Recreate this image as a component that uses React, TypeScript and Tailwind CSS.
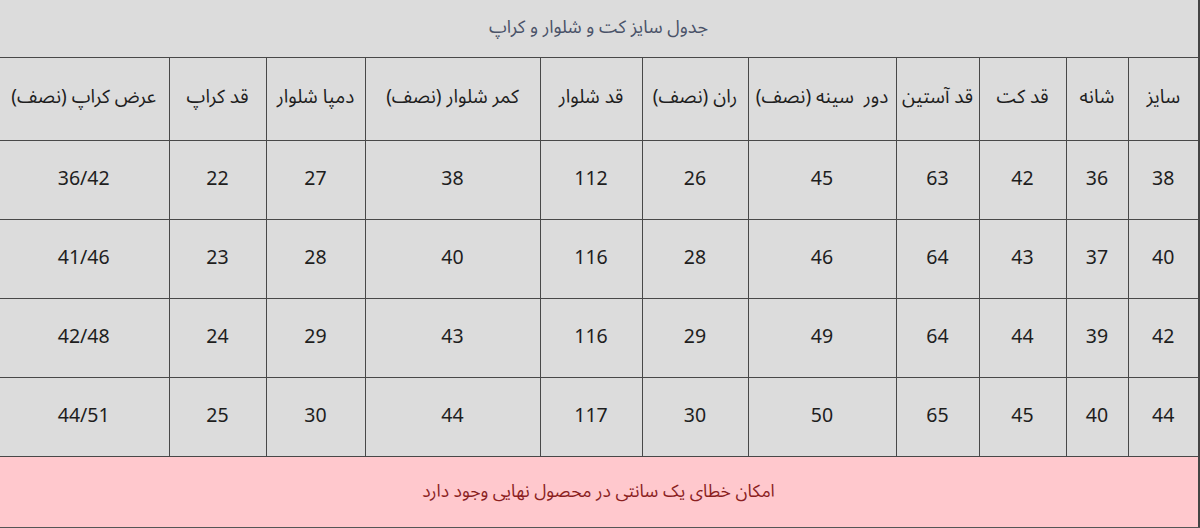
import React from "react";

const widths = [70, 62, 87, 83, 148, 106, 102, 175, 99, 97, 170];
const headers = [
  "سایز",
  "شانه",
  "قد کت",
  "قد آستین",
  "دور  سینه (نصف)",
  "ران (نصف)",
  "قد شلوار",
  "کمر شلوار (نصف)",
  "دمپا شلوار",
  "قد کراپ",
  "عرض کراپ (نصف)",
];
const rows = [
  ["38", "36", "42", "63", "45", "26", "112", "38", "27", "22", "36/42"],
  ["40", "37", "43", "64", "46", "28", "116", "40", "28", "23", "41/46"],
  ["42", "39", "44", "64", "49", "29", "116", "43", "29", "24", "42/48"],
  ["44", "40", "45", "65", "50", "30", "117", "44", "30", "25", "44/51"],
];

export default function App() {
  return (
    <div
      dir="rtl"
      className="w-[1200px] h-[528px] bg-white"
      style={{ fontFamily: '"Noto Sans", "Noto Sans Arabic", "DejaVu Sans", sans-serif' }}
    >
      <table className="w-[1200px] table-fixed border-collapse bg-[#dcdcdc] text-[#1e1e1e]">
        <colgroup>
          {widths.map((w, i) => (
            <col key={i} style={{ width: w + (i === 0 ? 1 : 0) }} />
          ))}
        </colgroup>
        <tbody>
          <tr className="h-[57px]">
            <td
              colSpan={11}
              className="border-r-2 border-r-[#444] pb-1 text-center text-[18px] text-[#4a5268] align-middle"
            >
              جدول سایز کت و شلوار و کراپ
            </td>
          </tr>
          <tr className="h-[83px]">
            {headers.map((h, i) => (
              <td
                key={i}
                className={`border border-[#484848] pb-1 text-center align-middle text-[19px] whitespace-pre ${i === 10 ? "border-l-0" : ""} ${i === 0 ? "border-r-2 border-r-[#444]" : ""}`}
              >
                {h}
              </td>
            ))}
          </tr>
          {rows.map((r, ri) => (
            <tr key={ri} className="h-[79px]">
              {r.map((c, i) => (
                <td
                  key={i}
                  className={`border border-[#484848] pb-1 text-center align-middle text-[19.5px] ${i === 10 ? "border-l-0" : ""} ${i === 0 ? "border-r-2 border-r-[#444]" : ""}`}
                >
                  {c}
                </td>
              ))}
            </tr>
          ))}
          <tr className="h-[72px]">
            <td
              colSpan={11}
              className="border-t border-t-[#484848] border-b-2 border-b-[#555] border-r-2 border-r-[#444] bg-[#ffc8cd] pb-1 text-center align-middle text-[17.5px] text-[#8b1f1f]"
            >
              امکان خطای یک سانتی در محصول نهایی وجود دارد
            </td>
          </tr>
        </tbody>
      </table>
    </div>
  );
}
